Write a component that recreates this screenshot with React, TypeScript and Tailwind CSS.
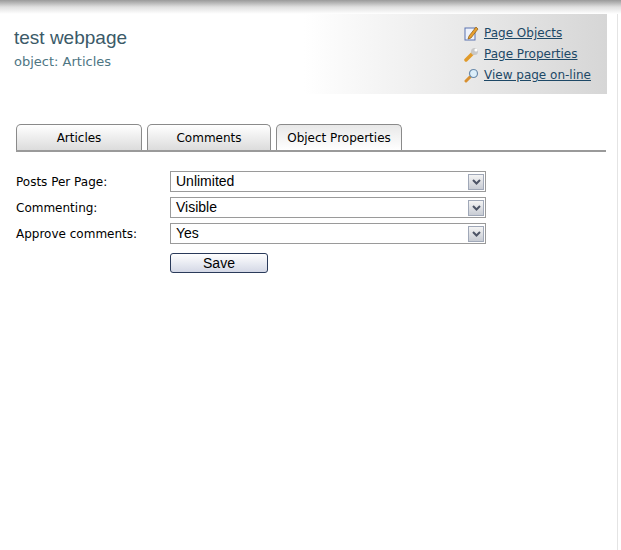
import React from 'react';

const Chevron = () => (
  <span className="flex h-[16px] w-[16px] items-center justify-center border border-[#a0a8b8] bg-gradient-to-b from-[#f4f4f4] to-[#c8ccd4]">
    <svg width="9" height="6" viewBox="0 0 9 6"><path d="M1 1 L4.5 4.5 L8 1" stroke="#4d5466" strokeWidth="2" fill="none" /></svg>
  </span>
);

const Select = ({ value }: { value: string }) => (
  <div className="flex h-[21px] w-[316px] items-center justify-between border border-[#9a9a9a] bg-white pl-[5px] pr-[1px] text-[14px] text-black" style={{ fontFamily: '"Liberation Sans", Arial, sans-serif' }}>
    <span>{value}</span>
    <Chevron />
  </div>
);

const links = [
  { label: 'Page Objects', icon: (
    <svg width="15" height="15" viewBox="0 0 15 15"><rect x="1" y="2" width="10" height="12" fill="#eef2fb" stroke="#5a72b0" /><path d="M5 10 L12 1 L14 3 L7 12 L4 13 Z" fill="#e8a030" stroke="#8a5a10" strokeWidth="0.7" /></svg>
  ) },
  { label: 'Page Properties', icon: (
    <svg width="15" height="15" viewBox="0 0 15 15"><path d="M2 13 L9 6" stroke="#e09a2a" strokeWidth="3.5" strokeLinecap="round" /><circle cx="10.5" cy="4.5" r="3.5" fill="#c8c8c8" /><circle cx="12" cy="3" r="1.6" fill="#fff" /></svg>
  ) },
  { label: 'View page on-line', icon: (
    <svg width="15" height="15" viewBox="0 0 15 15"><path d="M2 13 L6 9" stroke="#d89030" strokeWidth="3" strokeLinecap="round" /><circle cx="9.5" cy="5.5" r="4" fill="#dbeefa" stroke="#6a8aaa" strokeWidth="1.2" /></svg>
  ) },
];

const tabs = [
  { label: 'Articles', w: 'w-[126px]', active: false },
  { label: 'Comments', w: 'w-[124px]', active: false },
  { label: 'Object Properties', w: 'w-[126px]', active: true },
];

const rows = [
  { label: 'Posts Per Page:', value: 'Unlimited' },
  { label: 'Commenting:', value: 'Visible' },
  { label: 'Approve comments:', value: 'Yes' },
];

export default function App() {
  return (
    <div className="relative h-[550px] w-[621px] overflow-hidden bg-white text-[12px]" style={{ fontFamily: '"DejaVu Sans", Verdana, sans-serif' }}>
      <div className="h-[14px] bg-gradient-to-b from-[#9a9a9a] via-[#e0e0e0] to-white" />
      <div className="flex h-[80px] w-[607px] justify-between bg-gradient-to-r from-white from-50% to-[#d6d6d6] pl-[14px] pr-[16px]">
        <div className="pt-[13px]">
          <div className="text-[19px] leading-[22px] text-[#3b5a68]" style={{ fontFamily: '"Liberation Sans", Arial, sans-serif' }}>test webpage</div>
          <div className="mt-[3px] text-[13px] text-[#4e7683]">object: Articles</div>
        </div>
        <div className="flex flex-col gap-[4px] pt-[11px]">
          {links.map(l => (
            <div key={l.label} className="flex items-center gap-[5px]">
              {l.icon}
              <a className="text-[12px] leading-[17px] text-[#1d4866] underline">{l.label}</a>
            </div>
          ))}
        </div>
      </div>
      <div className="mx-[16px] mt-[30px] flex w-[590px] items-end gap-[5px] border-b-2 border-[#9a9a9a]">
        {tabs.map(t => (
          <div key={t.label} className={`${t.w} flex h-[26px] items-center justify-center rounded-t-[5px] border border-b-0 border-[#8a8a8a] bg-gradient-to-b ${t.active ? 'from-[#e8e8e8] to-white' : 'from-white to-[#dcdcdc]'} text-[12px] text-black`}>
            {t.label}
          </div>
        ))}
      </div>
      <div className="mt-[19px] flex flex-col gap-[5px] pl-[16px]">
        {rows.map(r => (
          <div key={r.label} className="flex items-center">
            <div className="w-[154px] text-[12px] text-black">{r.label}</div>
            <Select value={r.value} />
          </div>
        ))}
        <div className="mt-[4px] pl-[154px]">
          <button className="h-[20px] w-[98px] rounded-[3px] border border-[#2a3a5a] bg-gradient-to-b from-white to-[#d4d8e6] text-[14px] leading-none text-black" style={{ fontFamily: '"Liberation Sans", Arial, sans-serif' }}>Save</button>
        </div>
      </div>
      <div className="absolute right-[3px] top-[14px] bottom-0 w-px bg-[#e4e4e4]" />
    </div>
  );
}
